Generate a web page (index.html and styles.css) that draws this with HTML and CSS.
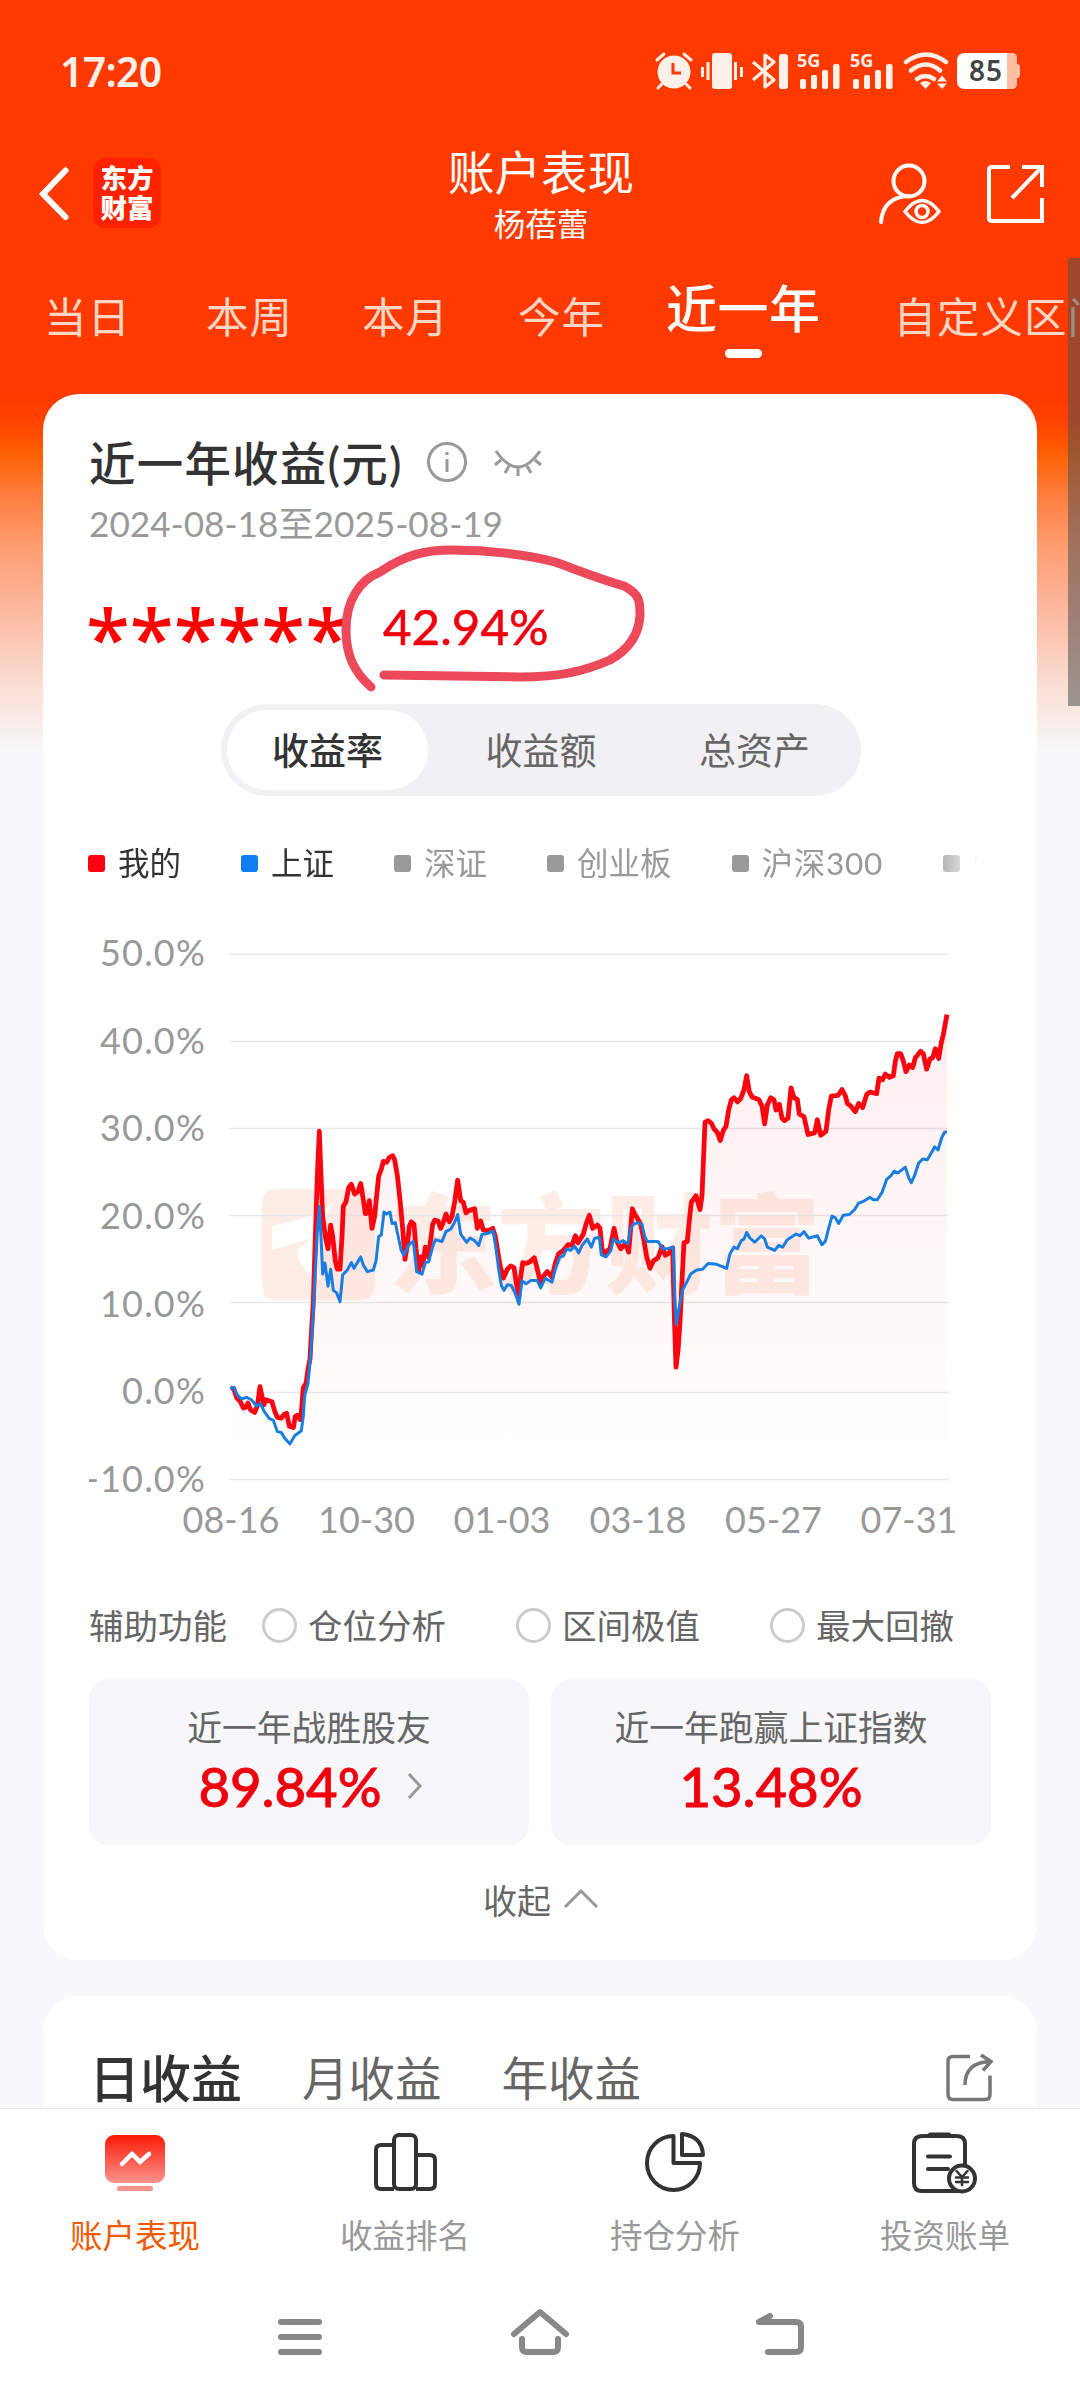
FILE: index.html
```html
<!DOCTYPE html>
<html lang="zh-CN">
<head>
  <meta charset="UTF-8" />
  <meta name="viewport" content="width=device-width, initial-scale=1.0"/>
  <title>账户表现</title>
  <link rel="stylesheet" href="styles.css">
</head>
<body>
  <div class="status-bar">
    <span class="clock">17:20</span>
    <svg class="status-icons" viewBox="650 48 374 46" width="374" height="46">
      <!-- alarm -->
      <circle cx="674" cy="72" r="16.5" fill="#fff1ea"/>
      <path d="M657 60l7-6M691 60l-7-6M662 84l-4 4M686 84l4 4" stroke="#fff1ea" stroke-width="3" stroke-linecap="round"/>
      <path d="M673 63v10h8" fill="none" stroke="#ff3a00" stroke-width="3"/>
      <!-- vibrate -->
      <rect x="712" y="53" width="20" height="36" rx="3" fill="#fff1ea"/>
      <path d="M702.500 67v10M708 62v18M735.500 62v18M741.500 67v10" stroke="#fff1ea" stroke-width="3"/>
      <!-- bluetooth -->
      <path d="M753 62l21 18-9 7V55l9 7-21 18" fill="none" stroke="#fff1ea" stroke-width="3.200" stroke-linejoin="round"/>
      <rect x="779" y="54" width="9" height="35" rx="3" fill="#fff1ea"/>
      <!-- signal x2 -->
      <g id="signal" fill="#fff1ea">
        <text x="797" y="66.500" class="net">5G</text>
        <rect x="800" y="79" width="6" height="10" rx="2"/>
        <rect x="811" y="75" width="6" height="14" rx="2"/>
        <rect x="822" y="70" width="6" height="19" rx="2"/>
        <rect x="833" y="64" width="6.500" height="25" rx="2"/>
      </g>
      <use href="#signal" x="53"/>
      <!-- wifi -->
      <path d="M906 62q20-15 40 0M911 70.500q15-12 29 0M917 79q8.500-6 17 0" fill="none" stroke="#fff1ea" stroke-width="4.500" stroke-linecap="round"/>
      <path d="M920 83q5.500-4 11 0l-5.500 6zM937 81.500l5-6 5 6zM937 83.500l5 5.500 5-5.500z" fill="#fff1ea"/>
      <!-- battery -->
      <path d="M1007 53h5q5 0 5 5v6q3 0 3 3v8q0 3-3 3v5q0 6-5 6h-5z" fill="#ffbfa5"/>
      <path d="M965 53h42v36h-42q-8 0-8-8V61q0-8 8-8z" fill="#fff"/>
      <text x="969" y="81" class="level">85</text>
    </svg>
  </div>

  <header class="header">
    <div class="header-left">
      <svg width="32" height="54" viewBox="0 0 32 54"><path d="M27.500 3.500L5 27l22.500 23" fill="none" stroke="#fff" stroke-width="6" stroke-linecap="round"/></svg>
      <div class="logo">东方<br>财富</div>
    </div>
    <div class="header-title">
      <h1>账户表现</h1>
      <p>杨蓓蕾</p>
    </div>
    <div class="header-right">
      <svg width="64" height="62" viewBox="877 161 64 62" fill="none" stroke="#fff" stroke-width="4">
        <circle cx="909" cy="179" r="15.500"/>
        <path d="M881 220q2-25 28-26" stroke-linecap="round"/>
        <path d="M905 209.500q17-22 34 0q-17 22-34 0z" stroke-width="3.500"/>
        <circle cx="922" cy="209.500" r="6" stroke-width="3.500"/>
      </svg>
      <svg width="58" height="60" viewBox="986 162 58 60" fill="none" stroke="#fff" stroke-width="4">
        <path d="M1010 165h-18q-3 0-3 3v48q0 3 3 3h50v-23"/>
        <path d="M1022 165h20v20M1041 166l-29 30"/>
      </svg>
    </div>
  </header>

  <nav class="tabs">
    <span>当日</span>
    <span>本周</span>
    <span>本月</span>
    <span>今年</span>
    <span class="active">近一年</span>
    <span>自定义区间</span>
  </nav>
  <div class="scrollbar"></div>

  <main>
    <section class="card">
      <div class="card-title">
        <h2>近一年收益(元)</h2>
        <svg class="info" width="42" height="42" viewBox="0 0 42 42" fill="none" stroke="#999" stroke-width="3">
          <circle cx="21" cy="21" r="18.500"/><path d="M21 18v13M21 11v3"/>
        </svg>
        <svg width="48" height="30" viewBox="0 0 48 30" fill="none" stroke="#999" stroke-width="3">
          <path d="M2 3q22 32 44 0M7 12l-6 5M41 12l6 5M15 18l-4 7M33 18l4 7M24 20v8"/>
        </svg>
      </div>
      <p class="date">2024-08-18至2025-08-19</p>
      <div class="amount">
        <span class="stars">******</span>
        <span class="rate">42.94%</span>
        <svg class="scribble" width="312" height="154" viewBox="336 540 312 154">
          <path d="M371 687C354 672 346 655 346 630C346 600 360 580 380 572C405 555 425 550 451 550C490 550 530 555 555 562C580 571 600 579 624 586C640 594 640 602 640 615C639 635 628 650 610 660C585 671 560 677 520 677L384 675" fill="none" stroke="#ec4a5a" stroke-width="9" stroke-linecap="round" stroke-linejoin="round"/>
        </svg>
      </div>

      <div class="segment">
        <span class="active">收益率</span>
        <span>收益额</span>
        <span>总资产</span>
      </div>

      <div class="legend">
        <span class="mine">我的</span>
        <span class="sh">上证</span>
        <span>深证</span>
        <span>创业板</span>
        <span>沪深300</span>
        <span>恒生</span>
      </div>

      <svg class="chart" viewBox="89 910 902 640" width="902" height="640">
        <defs>
          <linearGradient id="area" x1="0" y1="0" x2="0" y2="1">
            <stop offset="0" stop-color="#f01414" stop-opacity=".07"/>
            <stop offset="1" stop-color="#f01414" stop-opacity="0"/>
          </linearGradient>
        </defs>
        <g class="watermark">
          <path d="M276 1189h84q15 0 15 15v81q0 15-15 15h-84q-14 0-14-15v-81q0-15 14-15z"/>
          <path class="swoosh" d="M272 1226l28-7q20-6 34-17q-16 30-18 48q-2 14 6 31q-24-10-25-31l16-12l-41 12z"/>
          <text x="389" y="1285">东方财富</text>
        </g>
        <path class="grid" d="M229 954.500h720M229 1041.500h720M229 1128.500h720M229 1215.500h720M229 1302.500h720M229 1392.500h720M229 1479.500h720"/>
        <g transform="translate(60 910) scale(.33333 .40816)">
          <path fill="url(#area)" d="M513 1394V1172L550 1220L600 1190L640 1210L700 1268L724 1230L745 1120L760 960L778 542L788 750L804 830L812 772L832 880L840 880L850 726L874 672L902 670L916 744L928 712L936 780L956 652L970 616L998 602L1012 650L1035 856L1054 764L1076 884L1104 850L1124 760L1176 750L1193 662L1218 742L1244 732L1252 780L1298 780L1330 902L1352 872L1377 945L1388 864L1423 852L1442 915L1476 900L1496 842L1546 798L1588 748L1612 772L1634 840L1662 780L1682 830L1706 838L1717 732L1742 770L1770 878L1806 825L1838 828L1848 1120L1872 815L1894 716L1920 734L1935 520L1954 522L1981 565L2014 465L2042 462L2060 406L2076 458L2096 464L2114 524L2132 460L2174 516L2193 436L2232 506L2244 550L2298 542L2314 456L2346 440L2386 494L2420 452L2450 450L2457 412L2500 406L2512 352L2538 396L2582 346L2600 390L2636 364L2661 256V1394z"/>
          <polyline class="line red" points="513,1172 521,1172 530,1195 540,1203 550,1220 558,1218 564,1208 572,1225 584,1231 592,1215 600,1168 606,1192 612,1212 618,1200 636,1205 645,1230 652,1243 664,1245 672,1236 680,1233 688,1265 700,1268 706,1240 712,1238 720,1248 724,1230 730,1170 738,1160 745,1120 750,1100 754,1040 760,960 766,800 772,650 778,542 783,650 788,750 796,800 804,830 812,772 818,800 826,860 832,880 840,880 846,800 850,726 858,715 866,680 874,672 884,696 894,690 902,670 910,710 916,744 922,742 928,712 936,780 944,750 950,700 956,652 964,635 970,616 980,618 988,606 998,602 1004,612 1012,650 1020,710 1028,780 1035,856 1042,820 1048,775 1054,764 1062,770 1068,830 1076,884 1082,850 1088,870 1096,826 1104,850 1110,820 1118,770 1124,760 1134,762 1142,780 1150,765 1158,745 1168,764 1176,750 1184,715 1193,662 1202,712 1210,716 1218,742 1228,736 1244,732 1252,780 1262,762 1270,784 1284,786 1298,780 1306,800 1312,830 1320,870 1330,902 1342,880 1352,872 1362,876 1370,920 1377,945 1382,900 1388,864 1398,866 1410,862 1423,852 1432,880 1442,915 1452,895 1462,886 1476,900 1486,865 1496,842 1510,834 1524,820 1536,822 1546,798 1554,815 1570,794 1578,770 1588,748 1598,780 1612,772 1620,780 1626,830 1634,840 1650,830 1662,780 1670,810 1682,830 1696,818 1706,838 1712,780 1717,732 1724,745 1732,755 1742,770 1752,810 1760,850 1770,878 1780,860 1794,852 1806,825 1816,846 1828,840 1838,828 1840,900 1844,1020 1848,1120 1854,1080 1860,1010 1866,910 1872,815 1882,812 1888,760 1894,716 1908,700 1920,734 1926,700 1930,620 1935,520 1944,516 1954,522 1962,536 1972,545 1981,565 1990,540 1998,530 2006,490 2014,465 2022,460 2032,470 2042,462 2052,440 2060,406 2068,445 2076,458 2096,464 2106,480 2114,524 2122,478 2132,460 2142,465 2148,490 2158,476 2166,510 2174,516 2184,510 2193,436 2202,460 2212,464 2218,500 2232,506 2244,550 2264,546 2272,514 2282,552 2298,542 2306,490 2314,456 2334,454 2346,440 2356,455 2362,474 2372,480 2386,494 2396,474 2408,484 2420,452 2430,446 2450,450 2457,412 2468,416 2476,402 2488,410 2500,406 2506,370 2512,352 2522,352 2530,370 2538,396 2548,380 2558,386 2566,362 2582,346 2590,352 2600,390 2610,365 2618,362 2626,340 2636,364 2644,325 2650,305 2661,256"/>
          <polyline class="line blue" points="510,1172 522,1170 530,1186 544,1198 560,1194 574,1200 590,1215 602,1210 612,1228 628,1246 640,1250 652,1278 664,1280 674,1294 690,1308 704,1288 724,1276 730,1240 734,1190 744,1160 752,1090 760,980 766,880 772,790 778,726 783,800 788,892 795,865 804,922 812,880 820,932 830,938 840,960 848,894 862,882 874,864 882,878 902,850 910,870 922,886 940,882 948,860 956,800 964,796 972,740 980,745 990,740 996,768 1006,766 1012,790 1024,835 1032,846 1046,820 1060,812 1070,886 1086,892 1096,864 1106,862 1118,825 1126,808 1146,812 1158,788 1172,782 1184,765 1193,746 1202,794 1220,814 1230,804 1244,810 1256,822 1266,795 1284,792 1300,786 1308,830 1316,880 1324,920 1332,932 1342,918 1354,920 1366,940 1377,966 1386,908 1398,916 1412,908 1432,908 1442,926 1456,902 1476,912 1486,880 1500,850 1510,848 1520,830 1532,834 1544,824 1556,840 1566,822 1582,806 1594,826 1604,804 1618,802 1624,845 1638,850 1652,835 1660,806 1676,816 1690,810 1704,818 1712,780 1720,770 1734,766 1746,770 1754,800 1762,812 1794,812 1808,830 1822,830 1840,826 1844,950 1849,1015 1856,980 1868,930 1880,912 1892,892 1910,882 1928,880 1944,866 1970,868 2000,878 2010,842 2022,826 2032,830 2044,810 2052,806 2060,790 2070,804 2084,814 2104,798 2114,806 2122,826 2144,834 2156,822 2168,826 2182,808 2208,794 2220,798 2232,788 2246,804 2272,798 2286,820 2296,812 2306,780 2316,750 2326,754 2336,768 2350,748 2368,746 2384,734 2396,718 2410,714 2430,704 2440,710 2452,710 2466,692 2480,660 2494,650 2502,640 2514,644 2536,630 2546,656 2554,668 2564,650 2576,620 2588,610 2602,612 2616,592 2624,580 2634,588 2646,556 2654,544 2661,544"/>
        </g>
        <g class="axis-y">
          <text x="206" y="966">50.0%</text>
          <text x="206" y="1054">40.0%</text>
          <text x="206" y="1141">30.0%</text>
          <text x="206" y="1229">20.0%</text>
          <text x="206" y="1317">10.0%</text>
          <text x="206" y="1404">0.0%</text>
          <text x="206" y="1492">-10.0%</text>
        </g>
        <g class="axis-x">
          <text x="231" y="1533">08-16</text>
          <text x="366.500" y="1533">10-30</text>
          <text x="502" y="1533">01-03</text>
          <text x="638" y="1533">03-18</text>
          <text x="773.500" y="1533">05-27</text>
          <text x="909" y="1533">07-31</text>
        </g>
      </svg>

      <div class="helpers">
        <span>辅助功能</span>
        <label><i></i>仓位分析</label>
        <label><i></i>区间极值</label>
        <label><i></i>最大回撤</label>
      </div>

      <div class="stats">
        <div class="stat">
          <p>近一年战胜股友</p>
          <strong>89.84%
            <svg width="16" height="28" viewBox="0 0 16 28"><path d="M2 2l11 12L2 26" fill="none" stroke="#999" stroke-width="3"/></svg>
          </strong>
        </div>
        <div class="stat">
          <p>近一年跑赢上证指数</p>
          <strong>13.48%</strong>
        </div>
      </div>

      <div class="collapse">
        收起
        <svg width="36" height="20" viewBox="0 0 36 20"><path d="M2 18L18 2l16 16" fill="none" stroke="#999" stroke-width="3"/></svg>
      </div>
    </section>

    <section class="card profit">
      <span class="active">日收益</span>
      <span>月收益</span>
      <span>年收益</span>
      <svg width="48" height="50" viewBox="945 2053 48 50" fill="none" stroke="#777" stroke-width="3.500">
        <path d="M970 2056.500h-17q-5 0-5 5v33q0 5 5 5h32q5 0 5-5v-19"/>
        <path d="M965 2085q0-23 26-23.500M981 2055l10 6.500-8 9"/>
      </svg>
    </section>
  </main>

  <footer>
    <nav class="bottom-nav">
      <a class="active">
        <svg width="66" height="62" viewBox="102 2132 66 62">
          <defs>
            <linearGradient id="home" x1="0" y1="0" x2="0" y2="1">
              <stop offset="0" stop-color="#fb1a05"/>
              <stop offset="1" stop-color="#fb938c"/>
            </linearGradient>
          </defs>
          <rect x="105" y="2135" width="60" height="48" rx="9" fill="url(#home)"/>
          <rect x="117" y="2186" width="36" height="5" rx="2.500" fill="#fb938c"/>
          <path d="M122 2164l10-10 8 8 9-8" fill="none" stroke="#fff" stroke-width="4.500" stroke-linecap="round"/>
        </svg>
        账户表现
      </a>
      <a>
        <svg width="66" height="62" viewBox="372 2132 66 62" fill="none" stroke="#333" stroke-width="4">
          <path d="M394 2145h-13q-5 0-5 5v34q0 5 5 5h13M416 2155h14q5 0 5 5v24q0 5-5 5h-14"/>
          <rect x="394" y="2135" width="22" height="54" rx="5"/>
        </svg>
        收益排名
      </a>
      <a>
        <svg width="66" height="62" viewBox="642 2132 66 62" fill="none" stroke="#333" stroke-width="4" stroke-linejoin="round">
          <path d="M673.500 2136v27h26.500A26.500 27 0 1 1 673.500 2136z"/>
          <path d="M682 2134v21h21q-1-19-21-21z"/>
        </svg>
        持仓分析
      </a>
      <a>
        <svg width="68" height="62" viewBox="912 2132 68 62" fill="none" stroke="#333" stroke-width="4" stroke-linecap="round">
          <path d="M966 2164v-20q0-8-8-8h-35q-8 0-8 8v39q0 8 8 8h37"/>
          <path d="M931 2134.500h19M929 2156.500h22M929 2169h20" />
          <circle cx="963" cy="2178.500" r="13" fill="#fff"/>
          <path d="M957.500 2171l5.500 6 5.500-6M963 2177v8M957 2177.500h12M957 2182h12" stroke-width="2.500"/>
        </svg>
        投资账单
      </a>
    </nav>
    <div class="system-nav">
      <svg width="60" height="52" viewBox="270 2308 60 52"><path d="M281 2322h38M281 2337h38M281 2352h38"/></svg>
      <svg width="60" height="52" viewBox="510 2308 60 52"><path d="M514 2334l26-22 26 22M522 2339v8q0 5 5 5h26q5 0 5-5v-8"/></svg>
      <svg width="60" height="52" viewBox="750 2308 60 52"><path d="M770 2316l-11 6h37q5 0 5 5v20q0 5-5 5h-28"/></svg>
    </div>
  </footer>
</body>
</html>
```
FILE: styles.css
```css
* {
  margin: 0;
  padding: 0;
  box-sizing: border-box;
}

body {
  position: relative;
  width: 1080px;
  height: 2400px;
  overflow: hidden;
  font-family: "Lato", "Noto Sans CJK SC", sans-serif;
  color: #666;
  background: #f7f8fa linear-gradient(to bottom, #ff3a00 0, #ff3a00 395px, #ff4400 425px, #ff6000 453px, #ff7a38 490px, #ff9d70 547px, #fcbaa0 613px, #fadccf 680px, #f7f8fa 750px) no-repeat;
}

svg {
  display: block;
  flex-shrink: 0;
}

.status-bar {
  height: 142px;
  padding: 0 56px 0 60px;
  display: flex;
  align-items: center;
  justify-content: space-between;
}

.clock {
  color: #fff1ea;
  font-family: "Noto Sans", sans-serif;
  font-size: 41px;
  font-weight: 600;
  letter-spacing: -0.7px;
}

.net {
  font: bold 18px "Noto Sans", sans-serif;
}

.level {
  font: 600 28px "Noto Sans", sans-serif;
  letter-spacing: 1px;
  fill: #444;
}

.header {
  height: 102px;
  padding: 0 36px 0 38px;
  display: grid;
  grid-template-columns: 1fr auto 1fr;
  color: #fff;
}

.header-left,
.header-right {
  display: flex;
  align-items: center;
}

.header-right {
  justify-content: flex-end;
  gap: 45px;
}

.logo {
  width: 68px;
  height: 70px;
  margin: -2px 0 0 23px;
  padding-top: 5px;
  border-radius: 12px;
  background: #ff2200;
  text-align: center;
  font-size: 26.5px;
  font-weight: 900;
  line-height: 30px;
}

.header-title {
  text-align: center;
}

.header-title h1 {
  font-size: 46.5px;
  font-weight: 400;
  line-height: 61px;
}

.header-title p {
  font-size: 31.5px;
  line-height: 42px;
}

.tabs {
  height: 150px;
  padding: 43px 0 0 44px;
  display: flex;
  gap: 69px;
  white-space: nowrap;
  font-size: 42.5px;
  letter-spacing: 1px;
  line-height: 60px;
  color: #ffd5c4;
}

.tabs span:first-child {
  margin-right: 6px;
}

.tabs .active {
  margin: -8px 4px 0 -8px;
  color: #fff;
  font-size: 51px;
  font-weight: 500;
  letter-spacing: 0.5px;
}

.tabs .active::after {
  content: "";
  display: block;
  width: 37px;
  height: 9px;
  margin: 10px auto 0;
  border-radius: 5px;
  background: #fff;
}

.scrollbar {
  position: absolute;
  top: 258px;
  right: 0;
  width: 12px;
  height: 448px;
  background: rgba(80, 80, 80, 0.55);
}

.card {
  margin: 0 43px;
  padding: 39px 46px;
  border-radius: 36px;
  background: #fff;
}

.card-title {
  height: 60px;
  display: flex;
  align-items: center;
}

.card-title h2 {
  font-size: 46.5px;
  font-weight: 500;
  letter-spacing: 1.2px;
  line-height: 60px;
  color: #333;
}

.info {
  margin: -3px 26px 0 23px;
}

.date {
  margin-top: 8px;
  font-size: 35.2px;
  line-height: 44px;
  color: #999;
}

.amount {
  position: relative;
  height: 70px;
  margin-top: 46px;
  display: flex;
  color: #f0000f;
}

.stars {
  width: 295px;
  margin-left: -3px;
  font-family: "Noto Sans", sans-serif;
  font-size: 80px;
  font-weight: 500;
  line-height: 92px;
  color: #ff0000;
}

.rate {
  margin-left: 2px;
  font-size: 49.3px;
  line-height: 71px;
  -webkit-text-stroke: 0.6px #f0000f;
}

.scribble {
  position: absolute;
  left: 247px;
  top: -51px;
}

.segment {
  width: 640px;
  height: 92px;
  margin: 43px 0 0 132px;
  padding: 6px;
  display: grid;
  grid-template-columns: 201px 1fr 201px;
  border-radius: 46px;
  background: #f1f1f4;
  font-size: 37px;
  line-height: 82px;
  text-align: center;
}

.segment .active {
  height: 80px;
  border-radius: 40px;
  background: #fff;
  color: #333;
  font-weight: 500;
}

.legend {
  width: 892px;
  height: 40px;
  margin: 47px 0 0 -1px;
  display: flex;
  gap: 60px;
  overflow: hidden;
  white-space: nowrap;
  font-size: 31.5px;
  line-height: 40px;
  color: #999;
  -webkit-mask-image: linear-gradient(to right, #000 840px, transparent 892px);
  mask-image: linear-gradient(to right, #000 840px, transparent 892px);
}

.legend span {
  display: flex;
  align-items: center;
  flex-shrink: 0;
}

.legend span:nth-child(5) {
  letter-spacing: 0.7px;
}

.legend span::before {
  content: "";
  width: 17px;
  height: 17px;
  margin-right: 13px;
  border-radius: 3px;
  background: #999;
}

.legend .mine,
.legend .sh {
  color: #333;
}

.legend .mine::before {
  background: #ff0010;
}

.legend .sh::before {
  background: #0d7df0;
}

.chart {
  margin-top: 27px;
}

.grid {
  stroke: #e8e8e8;
  stroke-width: 1.5;
}

.watermark {
  fill: #feede7;
}

.watermark .swoosh {
  fill: #fff;
}

.watermark text {
  font-size: 108px;
  font-weight: 900;
}

.line {
  fill: none;
  stroke-linejoin: round;
  vector-effect: non-scaling-stroke;
}

.red {
  stroke: #fa0510;
  stroke-width: 4.8;
}

.blue {
  stroke: #1a7de0;
  stroke-width: 3;
}

.axis-y,
.axis-x {
  font-size: 36px;
  fill: #999;
}

.axis-y {
  text-anchor: end;
  letter-spacing: 1.2px;
}

.axis-x {
  text-anchor: middle;
}

.helpers {
  margin-top: 56px;
  display: flex;
  font-size: 34.5px;
  line-height: 40px;
}

.helpers label {
  display: flex;
  align-items: center;
  margin-left: 70px;
}

.helpers span + label {
  margin-left: 35px;
}

.helpers i {
  width: 35px;
  height: 35px;
  margin: -2px 11px 0 0;
  border: 3px solid #ccc;
  border-radius: 50%;
}

.stats {
  margin-top: 33px;
  display: grid;
  grid-template-columns: 1fr 1fr;
  gap: 22px;
}

.stat {
  height: 166px;
  padding-top: 27px;
  border-radius: 20px;
  background: #f7f7fa;
  text-align: center;
}

.stat p {
  font-size: 34.8px;
  line-height: 44px;
}

.stat strong {
  position: relative;
  display: inline-block;
  font-size: 54.5px;
  font-weight: 500;
  line-height: 72px;
  color: #f0000f;
  -webkit-text-stroke: 0.8px #f0000f;
}

.stat:first-child strong {
  left: -19px;
}

.stat svg {
  position: absolute;
  left: 100%;
  top: 22px;
  margin-left: 25px;
}

.collapse {
  margin-top: 36px;
  display: flex;
  align-items: center;
  justify-content: center;
  gap: 12px;
  padding-left: 2px;
  font-size: 34px;
  line-height: 40px;
}

.collapse svg {
  margin-top: -5px;
}

.profit {
  height: 112px;
  margin-top: 36px;
  padding: 48px 44px 0 46px;
  display: flex;
  gap: 60px;
  border-radius: 36px 36px 0 0;
  font-size: 46.5px;
  line-height: 69px;
}

.profit .active {
  font-size: 51px;
  font-weight: 500;
  color: #333;
}

.profit svg {
  margin: 9px 0 0 auto;
}

footer {
  position: relative;
  height: 292px;
  border-top: 1px solid #e6e8ea;
  background: #fff;
}

.bottom-nav {
  display: grid;
  grid-template-columns: repeat(4, 1fr);
  padding-top: 23px;
}

.bottom-nav a {
  display: flex;
  flex-direction: column;
  align-items: center;
  gap: 20px;
  font-size: 32.5px;
  line-height: 44px;
  color: #999;
}

.bottom-nav .active {
  color: #f05a00;
}

.system-nav {
  display: flex;
  justify-content: center;
  gap: 180px;
  padding-top: 50px;
}

.system-nav path {
  fill: none;
  stroke: #888;
  stroke-width: 6;
  stroke-linecap: round;
  stroke-linejoin: round;
}
```
